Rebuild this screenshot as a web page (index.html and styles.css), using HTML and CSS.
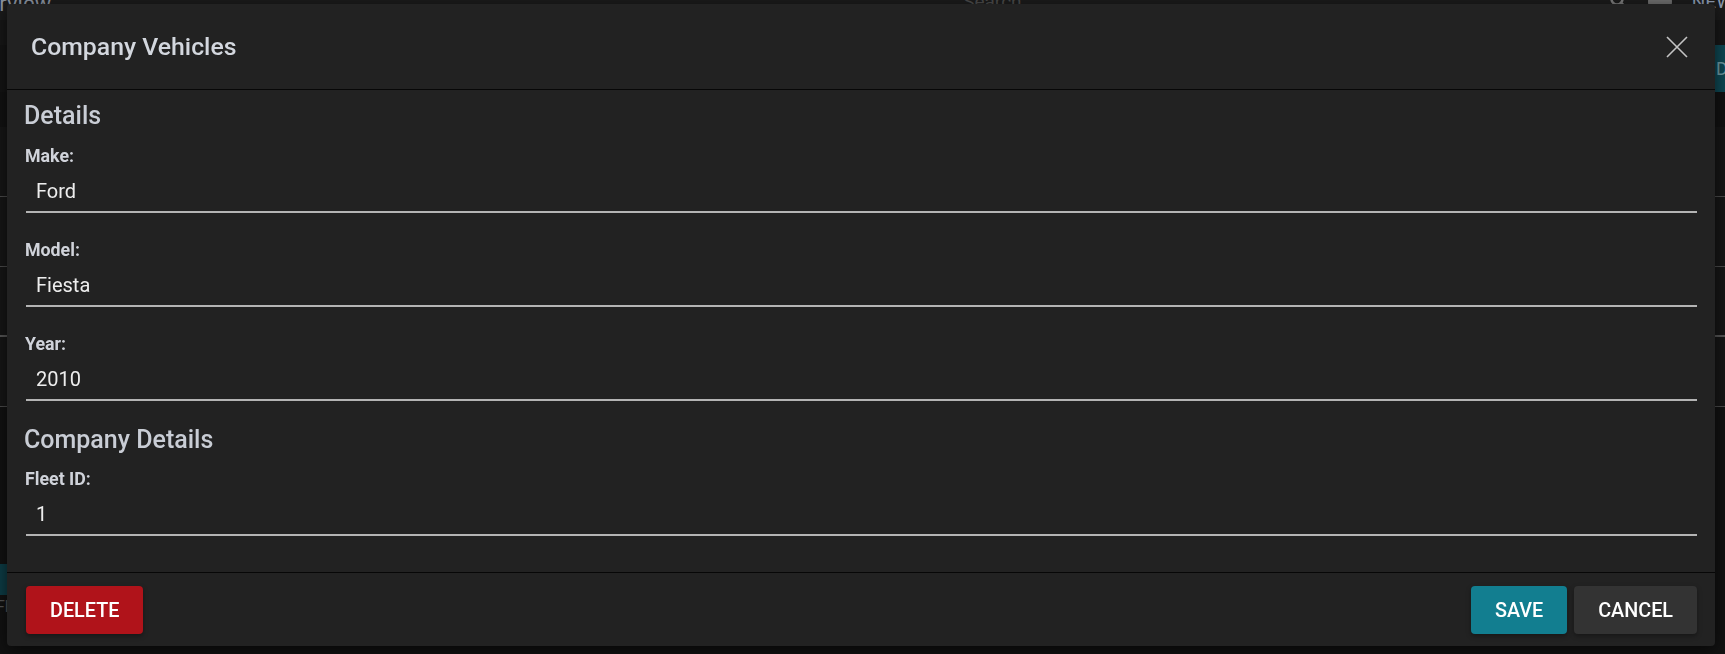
FILE: index.html
```html
<!DOCTYPE html>
<html lang="en">
<head>
<meta charset="utf-8">
<title>Company Vehicles</title>
<link rel="stylesheet" href="styles.css">
</head>
<body>
<div class="app">
  <header class="topbar">
    <span class="app-title">Overview</span>
    <span class="search">Search</span>
    <span class="top-tools">
      <svg class="tool-search" width="18" height="18" viewBox="0 0 18 18"><circle cx="7" cy="7" r="5.5" fill="none" stroke="#7a7a7a" stroke-width="2.5"/><path d="M11 11l5 5" stroke="#7a7a7a" stroke-width="3"/></svg>
      <span class="avatar"></span>
      <span class="new">NEW</span>
    </span>
  </header>
  <div class="subbar"></div>
  <div class="action-row"><span class="update-btn">DATA</span></div>
  <div class="grid-area">
    <div class="grid-row"></div>
    <div class="grid-row"></div>
    <div class="grid-row thick"></div>
    <div class="grid-row"></div>
  </div>
  <div class="bottom-row">
    <span class="left-btn">ADD</span>
    <span class="foot-text">Fleet</span>
  </div>
</div>

<div class="overlay">
  <div class="modal">
    <div class="modal-header">
      <h2 class="modal-title">Company Vehicles</h2>
      <button class="close-btn" aria-label="Close">
        <svg width="22" height="22" viewBox="0 0 22 22"><path d="M1 1L21 21M21 1L1 21" stroke="#c4c4c4" stroke-width="1.6" fill="none"/></svg>
      </button>
    </div>
    <div class="modal-body">
      <h3 class="section-title">Details</h3>
      <div class="field">
        <label class="field-label">Make:</label>
        <div class="field-input">Ford</div>
      </div>
      <div class="field">
        <label class="field-label">Model:</label>
        <div class="field-input">Fiesta</div>
      </div>
      <div class="field">
        <label class="field-label">Year:</label>
        <div class="field-input">2010</div>
      </div>
      <h3 class="section-title section-second">Company Details</h3>
      <div class="field">
        <label class="field-label">Fleet ID:</label>
        <div class="field-input">1</div>
      </div>
    </div>
    <div class="modal-footer">
      <button class="btn btn-delete">DELETE</button>
      <div class="footer-right">
        <button class="btn btn-save">SAVE</button>
        <button class="btn btn-cancel">CANCEL</button>
      </div>
    </div>
  </div>
</div>
</body>
</html>
```

FILE: styles.css
```css
* { box-sizing: border-box; }

html, body {
  margin: 0;
  padding: 0;
  width: 1725px;
  height: 654px;
  overflow: hidden;
  background: #111111;
  font-family: Roboto, "Liberation Sans", sans-serif;
}

/* ---------- background application (dimmed) ---------- */
.app {
  width: 1725px;
  height: 654px;
  overflow: hidden;
  display: flex;
  flex-direction: column;
  background: #121212;
}

.topbar {
  height: 20px;
  background: #1b1b1b;
  display: flex;
  align-items: flex-start;
  color: #7d8694;
}

.app-title {
  font-size: 22px;
  line-height: 22px;
  margin-top: -7px;
  margin-left: -38px;
  color: #8b93a0;
}

.search {
  font-size: 19px;
  line-height: 22px;
  margin-top: -9px;
  margin-left: 912px;
  color: #4a4a4a;
}

.top-tools {
  margin-left: auto;
  display: flex;
  align-items: flex-start;
  gap: 20px;
  margin-right: -8px;
}

.tool-search { margin-top: -8px; }

.avatar {
  width: 24px;
  height: 24px;
  border-radius: 50%;
  background: #6f6f6f;
  margin-top: -10px;
}

.new {
  font-size: 19px;
  line-height: 22px;
  margin-top: -9px;
  color: #8d9bb2;
}

.subbar {
  height: 25px;
  background: #171717;
}

.action-row {
  height: 47px;
  display: flex;
  justify-content: flex-end;
  background: #141414;
}

.update-btn {
  width: 130px;
  margin-right: -60px;
  background: #0e4753;
  color: #6f9aa3;
  font-size: 18px;
  line-height: 47px;
  padding-left: 61px;
  white-space: nowrap;
}

.grid-area {
  flex: 1;
  display: flex;
  flex-direction: column;
  padding-top: 35px;
}

.grid-row {
  height: 70px;
  border-bottom: 1px solid #4a4a4a;
  background: #161616;
}

.grid-row.thick { border-bottom: 2px solid #555555; }

.bottom-row {
  height: 90px;
  display: flex;
  flex-direction: column;
}

.left-btn {
  width: 80px;
  height: 31px;
  background: #0d3c45;
  color: #5c8890;
  font-size: 16px;
  line-height: 31px;
  padding-left: 10px;
}

.foot-text {
  color: #555;
  font-size: 16px;
  line-height: 24px;
  margin-left: -4px;
}

/* ---------- modal overlay ---------- */
.overlay {
  position: fixed;
  inset: 0;
  padding: 4px 10px 8px 7px;
  display: flex;
}

.modal {
  flex: 1;
  display: flex;
  flex-direction: column;
  background: #222222;
  border-radius: 4px;
  box-shadow: 0 4px 16px rgba(0, 0, 0, 0.6);
  overflow: hidden;
}

.modal-header {
  height: 86px;
  flex: none;
  display: flex;
  align-items: center;
  justify-content: space-between;
  padding: 0 27px 0 24px;
  border-bottom: 1px solid #070707;
}

.modal-title {
  margin: 0;
  font-size: 24.8px;
  line-height: 28px;
  font-weight: 500;
  color: #d3d7de;
}

.close-btn {
  width: 22px;
  height: 22px;
  padding: 0;
  margin: 0;
  border: 0;
  background: transparent;
  display: flex;
}

.modal-body {
  flex: 1;
  padding: 12px 18px 0 19px;
}

.section-title {
  margin: 0 0 16px -2px;
  font-size: 25px;
  line-height: 28px;
  font-weight: 500;
  color: #c9cdd5;
}

.section-second {
  margin-top: 25px;
  margin-bottom: 15px;
}

.field + .field { margin-top: 27px; }

.field-label {
  display: block;
  margin: 0 0 6px -1px;
  font-size: 17.8px;
  line-height: 20px;
  font-weight: 700;
  color: #d0d3da;
}

.field-input {
  height: 41px;
  padding-left: 10px;
  font-size: 20px;
  line-height: 39px;
  color: #ededed;
  border-bottom: 2px solid #b4b4b4;
}

.modal-footer {
  height: 74px;
  flex: none;
  display: flex;
  align-items: flex-start;
  justify-content: space-between;
  padding: 13px 18px 0 19px;
  border-top: 1px solid #070707;
}

.footer-right {
  display: flex;
  gap: 7px;
}

.btn {
  height: 48px;
  padding: 0 24px;
  border: 0;
  border-radius: 4px;
  font-family: Roboto, "Liberation Sans", sans-serif;
  font-size: 19.8px;
  font-weight: 500;
  color: #ffffff;
  box-shadow: 0 2px 5px rgba(0, 0, 0, 0.35);
}

.btn-delete { background: #b0131a; }
.btn-save { background: #127e90; }
.btn-cancel { background: #333333; }
```
